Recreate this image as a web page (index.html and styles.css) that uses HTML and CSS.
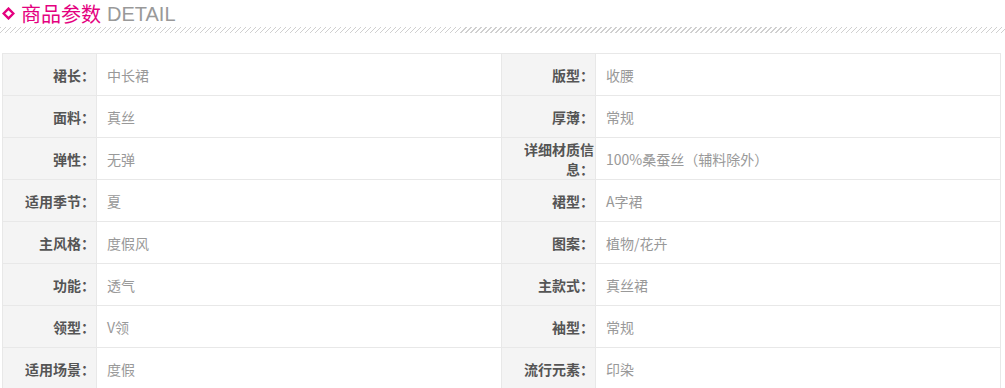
FILE: index.html
```html
<!DOCTYPE html>
<html lang="zh">
<head>
<meta charset="utf-8">
<link rel="stylesheet" href="styles.css">
</head>
<body>
<div class="detail">
  <div class="title">
    <svg class="diamond" width="13" height="13" viewBox="0 0 13 13"><path d="M6.5 1.6 L11.4 6.5 L6.5 11.4 L1.6 6.5 Z" fill="none" stroke="#e4007f" stroke-width="2.4"/></svg>
    <span class="cn">商品参数</span><span class="en">DETAIL</span>
  </div>
  <div class="hatch"></div>
  <table class="params">
    <tr><th>裙长：</th><td>中长裙</td><th>版型：</th><td>收腰</td></tr>
    <tr><th>面料：</th><td>真丝</td><th>厚薄：</th><td>常规</td></tr>
    <tr><th>弹性：</th><td>无弹</td><th>详细材质信息：</th><td>100%桑蚕丝（辅料除外）</td></tr>
    <tr><th>适用季节：</th><td>夏</td><th>裙型：</th><td>A字裙</td></tr>
    <tr><th>主风格：</th><td>度假风</td><th>图案：</th><td>植物/花卉</td></tr>
    <tr><th>功能：</th><td>透气</td><th>主款式：</th><td>真丝裙</td></tr>
    <tr><th>领型：</th><td>V领</td><th>袖型：</th><td>常规</td></tr>
    <tr><th>适用场景：</th><td>度假</td><th>流行元素：</th><td>印染</td></tr>
  </table>
</div>
</body>
</html>
```
FILE: styles.css
```css
html, body { margin: 0; padding: 0; background: #fff; }
body { font-family: "Noto Sans CJK SC", "Microsoft YaHei", sans-serif; }
.detail { width: 1005px; }
.title { height: 27px; display: flex; align-items: center; padding-left: 2px; line-height: 24px; }
.diamond { margin-right: 6px; }
.cn { font-size: 20px; color: #e4007f; margin-right: 6px; }
.en { font-family: "Liberation Sans", Arial, sans-serif; font-size: 20px; color: #999; }
.hatch { height: 6px; background: repeating-linear-gradient(135deg, #d0d0d0 0 1px, transparent 1px 3.54px); }
.params { margin: 20px 0 0 2px; width: 999px; border-collapse: collapse; table-layout: fixed; font-size: 14px; }
.params th, .params td { border: 1px solid #e8e8e8; height: 42px; padding: 0; line-height: 20px; box-sizing: border-box; }
.params th { width: 94px; background: #f4f4f4; color: #555; font-weight: bold; text-align: right; padding: 0 1px 0 10px; }
.params td { width: 405px; background: #fff; color: #999; text-align: left; padding-left: 10px; }
```
